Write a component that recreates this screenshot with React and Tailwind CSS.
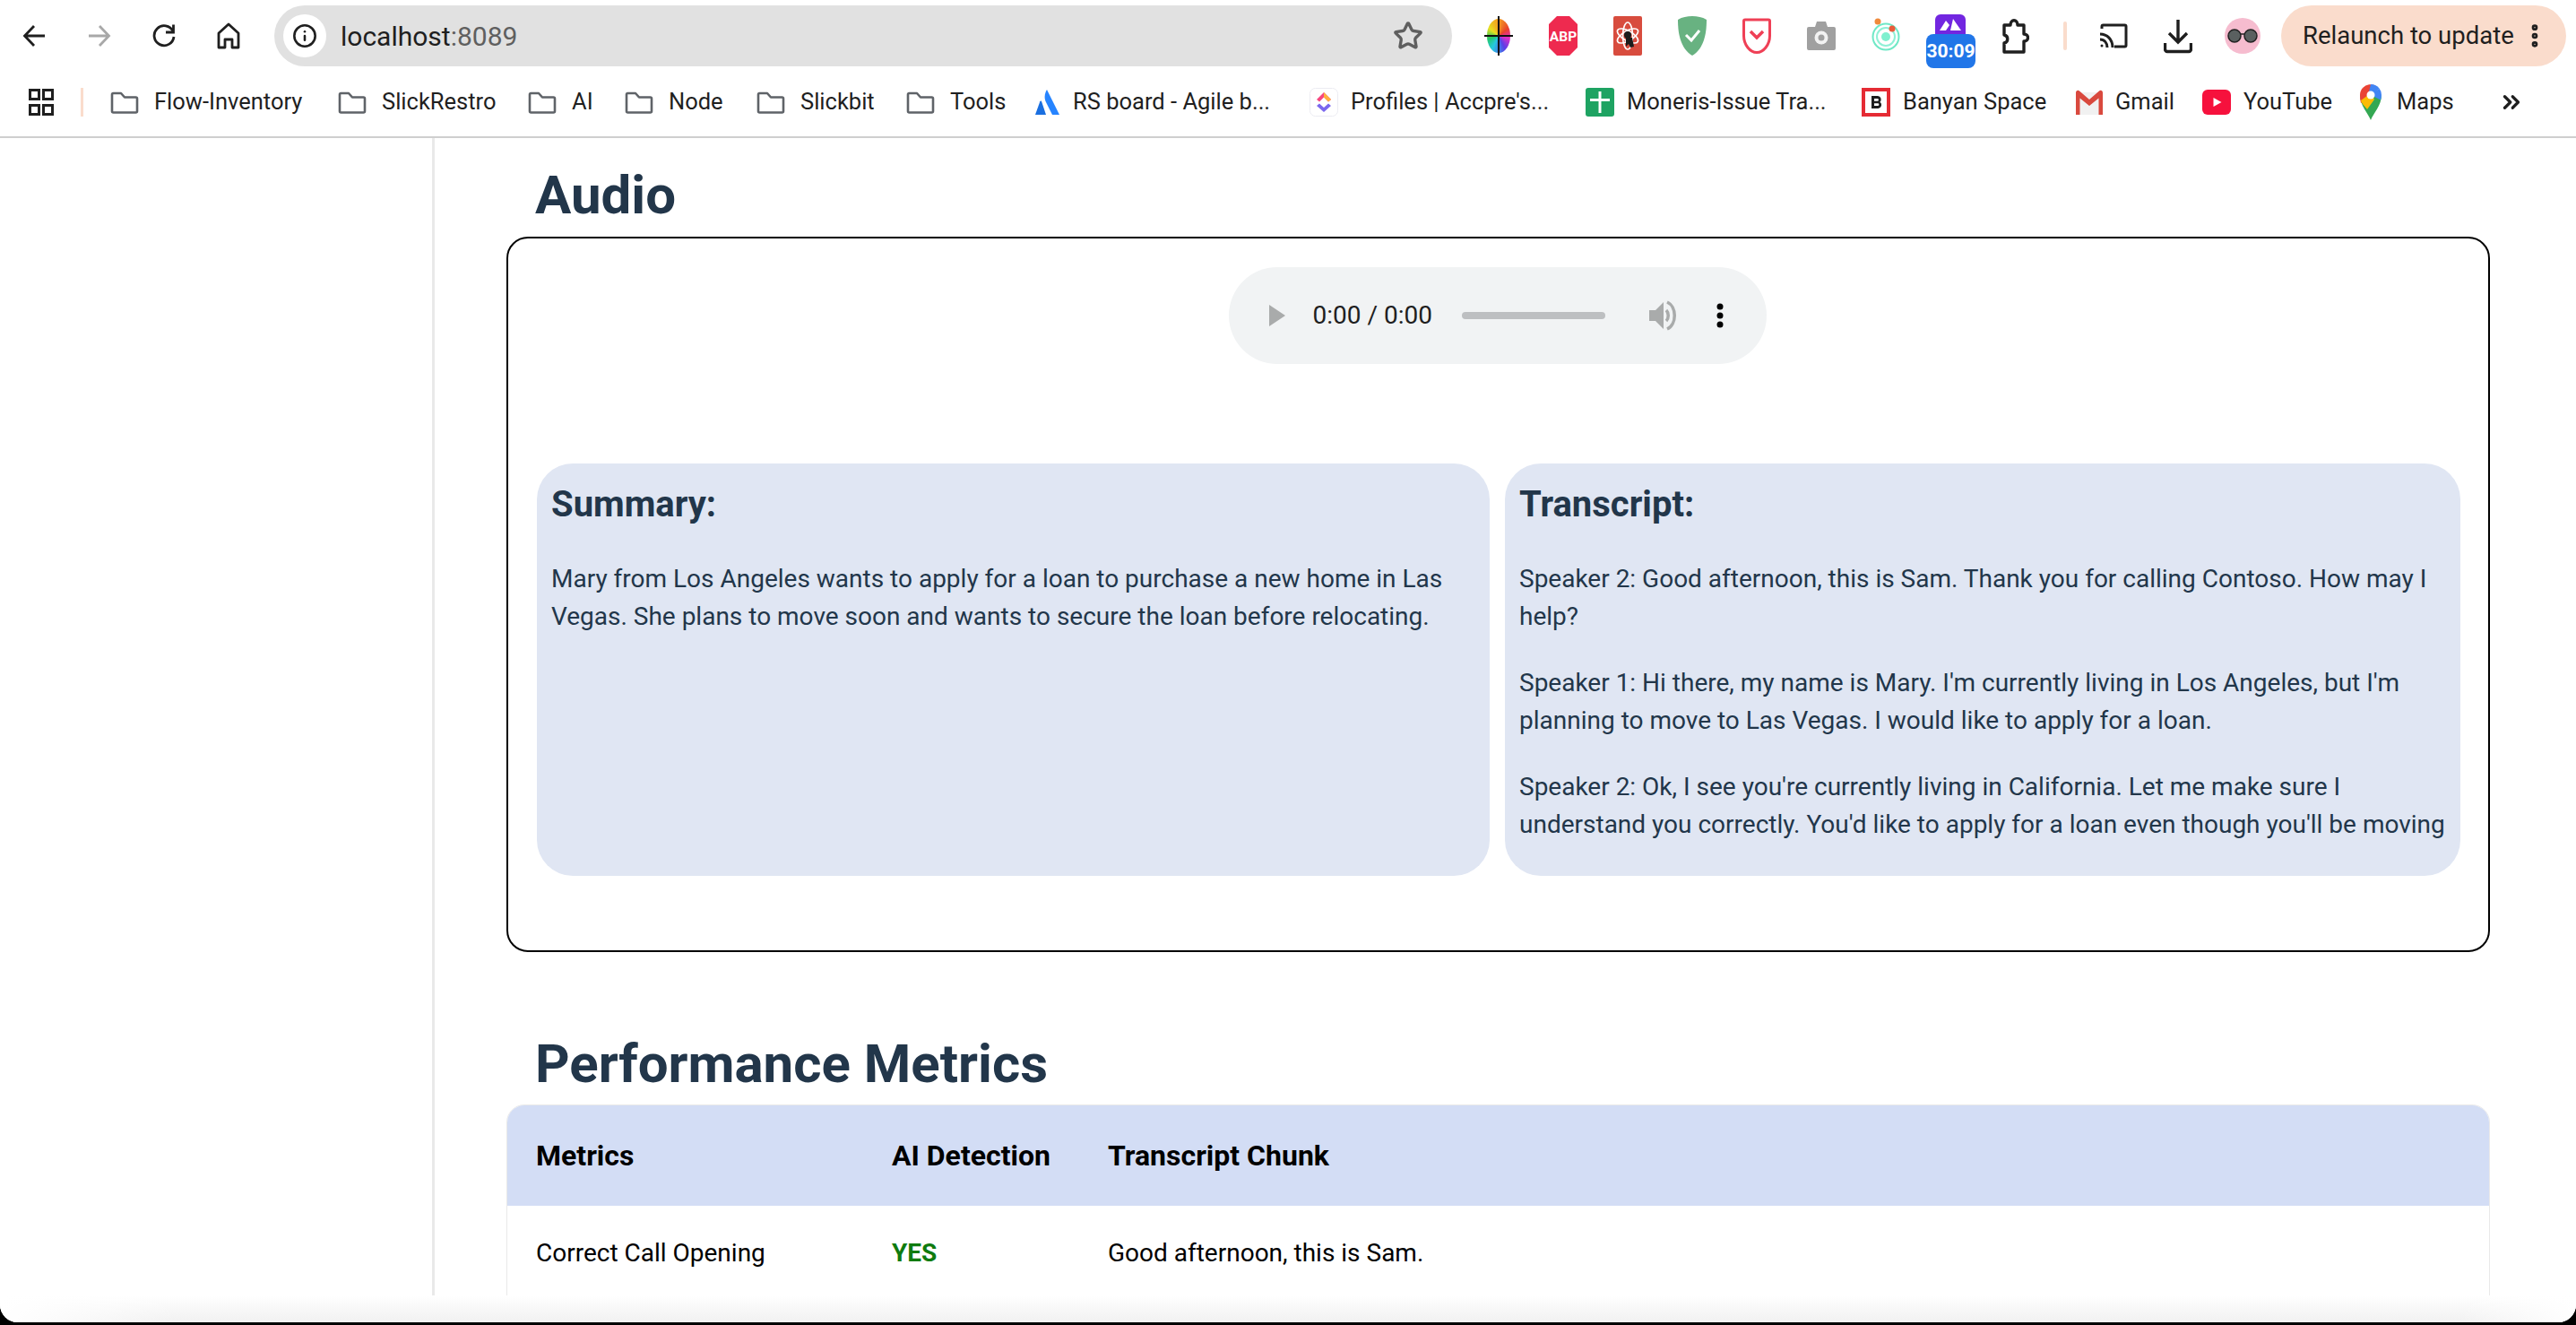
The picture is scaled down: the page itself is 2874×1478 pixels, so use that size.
import React from 'react';
import { Info, Star, MoreVertical, ChevronsRight } from 'lucide-react';

const bookmarks = [
  { label: 'Flow-Inventory', icon: 'folder', width: 'w-[254px]' },
  { label: 'SlickRestro', icon: 'folder', width: 'w-[212px]' },
  { label: 'AI', icon: 'folder', width: 'w-[108px]' },
  { label: 'Node', icon: 'folder', width: 'w-[147px]' },
  { label: 'Slickbit', icon: 'folder', width: 'w-[167px]' },
  { label: 'Tools', icon: 'folder', width: 'w-[144px]' },
  { label: 'RS board - Agile b...', icon: 'atlassian', width: 'w-[306px]' },
  { label: "Profiles | Accpre's...", icon: 'clickup', width: 'w-[308px]' },
  { label: 'Moneris-Issue Tra...', icon: 'sheet', width: 'w-[308px]' },
  { label: 'Banyan Space', icon: 'banyan', width: 'w-[239px]' },
  { label: 'Gmail', icon: 'gmail', width: 'w-[141px]' },
  { label: 'YouTube', icon: 'youtube', width: 'w-[176px]' },
  { label: 'Maps', icon: 'maps', width: 'w-[110px]' },
];

const FavIcon = ({ name }) => {
  if (name === 'folder') {
    return (
      <svg width="32" height="32" viewBox="0 0 32 32" fill="none" stroke="#5f6368" strokeWidth="2.6" className="shrink-0 mr-[3px]">
        <path d="M2 7.5a1.5 1.5 0 0 1 1.5-1.5h8.5l4 4.5h12.5a1.5 1.5 0 0 1 1.5 1.5v14a1.5 1.5 0 0 1-1.5 1.5h-25a1.5 1.5 0 0 1-1.5-1.5z" strokeLinejoin="round" />
      </svg>
    );
  }
  if (name === 'atlassian') {
    return (
      <svg width="28" height="32" viewBox="0 0 28 32" className="shrink-0">
        <path d="M13 2c-3 5-3 10-1 14l7 14h8z" fill="#2684ff" />
        <path d="M7 15c-.6-.8-1.3-.6-1.7.2L0 30h12z" fill="#1a6fe0" />
      </svg>
    );
  }
  if (name === 'clickup') {
    return (
      <svg width="32" height="32" viewBox="0 0 32 32" className="shrink-0">
        <rect x="0.500" y="0.500" width="31" height="31" rx="6" fill="#fff" stroke="#ececf2" />
        <path d="M8 13l8-8 8 8-3 2.600-5-5-5 5z" fill="#f7477f" />
        <path d="M16 5l8 8-3 2.600-5-5z" fill="#ffb13d" />
        <path d="M8 20l3-2.600 5 4.600 5-4.600 3 2.600-8 7z" fill="#7b68ee" />
      </svg>
    );
  }
  if (name === 'sheet') {
    return (
      <svg width="32" height="32" viewBox="0 0 32 32" className="shrink-0">
        <rect width="32" height="32" rx="3" fill="#1ea362" />
        <path d="M14.500 4h3v8H27v3h-9.500v13h-3V15H5v-3h9.500z" fill="#fff" />
      </svg>
    );
  }
  if (name === 'banyan') {
    return (
      <svg width="32" height="32" viewBox="0 0 32 32" className="shrink-0">
        <rect x="2" y="2" width="28" height="28" fill="#fff" stroke="#e52b34" strokeWidth="4" />
        <path d="M11 9h7a4 4 0 0 1 2.500 6.800A4 4 0 0 1 18.500 23H11zm3 3v2.800h3.500a1.400 1.400 0 0 0 0-2.800zm0 5.300V20h4a1.350 1.350 0 0 0 0-2.700z" fill="#1c1c1c" fillRule="evenodd" />
      </svg>
    );
  }
  if (name === 'gmail') {
    return (
      <svg width="30" height="28" viewBox="0 0 30 28" className="shrink-0">
        <path d="M0 3h30v25H0z" fill="#f1f1f1" />
        <path d="M3 4l12 10L27 4v4L15 18 3 8z" fill="#dcdcdc" />
        <path d="M0 3.500C0 1 2.500 0 4 1.500L15 11 26 1.500C27.500 0 30 1 30 3.500V28h-4.500V9.500L15 18 4.500 9.500V28H0z" fill="#d9493e" />
      </svg>
    );
  }
  if (name === 'youtube') {
    return (
      <svg width="32" height="28" viewBox="0 0 32 28" className="shrink-0">
        <rect width="32" height="28" rx="6" fill="#f6113d" />
        <path d="M12.500 9l9 5-9 5z" fill="#fff" />
      </svg>
    );
  }
  return (
    <svg width="24" height="40" viewBox="0 0 24 40" className="shrink-0 mr-[3px]">
      <path d="M12 40C9 32 0 24 0 12h24c0 12-9 20-12 28z" fill="#34a853" />
      <path d="M3 4L12 12 1 21c-.7-3-1-6-1-9 0-3 1-6 3-8z" fill="#ea4335" />
      <path d="M3 4a12 12 0 0 1 15-2L7 16z" fill="#ea4335" />
      <path d="M12 0a12 12 0 0 1 9.500 4.500L8 17z" fill="#4285f4" />
      <path d="M21.500 4.500A12 12 0 0 1 24 12c0 2-.3 3.800-1 5.500L12 12z" fill="#4285f4" />
      <path d="M1 18l11-8 4 7-8 11c-2-3-6-6-7-10z" fill="#fbbc04" />
      <circle cx="12" cy="12" r="4.500" fill="#fff" />
    </svg>
  );
};

const Extensions = () => (
  <div className="flex items-center gap-[40px] ml-[36px]">
    {/* colour wheel */}
    <div className="relative w-[32px] h-[44px] shrink-0">
      <div className="absolute left-[3px] right-[3px] top-[3px] bottom-[3px] rounded-[50%] bg-[conic-gradient(#f39a20,#e8412a,#e22dc8,#5a3fe8,#25c8e0,#25c860,#e8e020,#f39a20)]" />
      <div className="absolute left-[15px] top-0 bottom-0 w-[2px] bg-[#111]" />
      <div className="absolute top-[21px] left-0 right-0 h-[2px] bg-[#111]" />
    </div>
    <svg width="32" height="44" viewBox="0 0 32 44" className="shrink-0">
      <path d="M9 0h14l9 9v26l-9 9H9l-9-9V9z" fill="#ee2a4f" />
      <text x="16" y="28" textAnchor="middle" fill="#fff" fontSize="15.500" fontWeight="700" fontFamily="Roboto, sans-serif">ABP</text>
    </svg>
    <svg width="32" height="44" viewBox="0 0 32 44" className="shrink-0">
      <rect width="32" height="44" rx="2" fill="#d84c3e" />
      <g fill="none" stroke="#fff" strokeWidth="1.600">
        <ellipse cx="16" cy="22" rx="13" ry="5.500" transform="rotate(30 16 22)" />
        <ellipse cx="16" cy="22" rx="13" ry="5.500" transform="rotate(-30 16 22)" />
        <ellipse cx="16" cy="22" rx="5.500" ry="15" />
      </g>
      <circle cx="16" cy="21" r="4" fill="#1c1c1c" />
      <path d="M14 24h7l2 10-4 1-2-4-3 3z" fill="#1c1c1c" />
    </svg>
    <svg width="32" height="44" viewBox="0 0 32 44" className="shrink-0">
      <path d="M16 0c6 0 11 1 16 4 0 16-3 32-16 40C3 36 0 20 0 4c5-3 10-4 16-4z" fill="#68b281" />
      <path d="M9 21l6 6 9-11" fill="none" stroke="#fff" strokeWidth="3" />
    </svg>
    <svg width="32" height="40" viewBox="0 0 32 40" className="shrink-0">
      <path d="M3 2h26a1.500 1.500 0 0 1 1.500 1.500V20c0 10-7 18.500-14.500 18.500S1.500 30 1.500 20V3.500A1.500 1.500 0 0 1 3 2z" fill="#fff" stroke="#ef4056" strokeWidth="3" />
      <path d="M9 15l7 7 7-7" fill="none" stroke="#ef4056" strokeWidth="3.500" />
    </svg>
    <svg width="32" height="36" viewBox="0 0 32 36" className="shrink-0">
      <path d="M2 8h7l2-6h10l2 6h7a2 2 0 0 1 2 2v22a2 2 0 0 1-2 2H2a2 2 0 0 1-2-2V10a2 2 0 0 1 2-2z" fill="#a0a0a0" />
      <circle cx="16" cy="20" r="7.500" fill="#f2f2f2" />
      <circle cx="16" cy="20" r="3.500" fill="#a0a0a0" />
    </svg>
    <svg width="32" height="44" viewBox="0 0 32 44" className="shrink-0">
      <circle cx="16" cy="23" r="14.500" fill="none" stroke="#6fe8c6" strokeWidth="2" />
      <circle cx="16" cy="23" r="10" fill="none" stroke="#8ff0d6" strokeWidth="2" />
      <circle cx="16" cy="23" r="5" fill="#7ff0cf" />
      <circle cx="7" cy="6" r="3.500" fill="#f08a3c" />
      <circle cx="23" cy="14" r="3.500" fill="#ea5b3a" />
    </svg>
    {/* timer badge sits wider than the other icons */}
    <div className="relative w-[32px] h-[44px] shrink-0">
      <div className="absolute left-[-1px] top-[-2px] w-[34px] h-[22px] rounded-t-[6px] bg-[#7226e0]">
        <svg width="34" height="16" viewBox="0 0 34 16" className="mt-[3px]">
          <path d="M5 15l7-11 4 5-4 6zM20 2l9 13h-12z" fill="#fff" />
        </svg>
      </div>
      <div className="absolute left-[-11px] top-[20px] w-[55px] h-[38px] rounded-[8px] bg-[#2176e8] flex items-center justify-center text-white font-bold text-[21px] leading-none whitespace-nowrap">
        30:09
      </div>
    </div>
    <svg width="32" height="44" viewBox="0 0 32 44" fill="none" stroke="#1f1f1f" strokeWidth="3.400" className="shrink-0">
      <path d="M4 10h7c0-7 8-7 8 0h7v10c6 0 6 8 0 8v12H4V30c5-1 5-8 0-9z" strokeLinejoin="round" />
    </svg>
  </div>
);

const Toolbar = () => (
  <div className="flex items-center h-[80px] pl-[25px] pr-[12px]">
    <svg width="26" height="26" viewBox="0 0 26 26" fill="none" stroke="#1f1f1f" strokeWidth="2.800" className="shrink-0">
      <path d="M25 13H3M13 2L2.500 13 13 24" />
    </svg>
    <svg width="26" height="26" viewBox="0 0 26 26" fill="none" stroke="#a8a8a8" strokeWidth="2.800" className="shrink-0 ml-[47px]">
      <path d="M1 13h22M13 2l10.500 11L13 24" />
    </svg>
    <svg width="26" height="28" viewBox="0 0 26 28" fill="none" stroke="#1f1f1f" strokeWidth="2.800" className="shrink-0 ml-[46px]">
      <path d="M23 9a11 11 0 1 0 1 6" />
      <path d="M23.500 1.500V10h-8.500" />
    </svg>
    <svg width="26" height="30" viewBox="0 0 26 30" fill="none" stroke="#1f1f1f" strokeWidth="2.800" className="shrink-0 ml-[46px]">
      <path d="M2 12L13 2l11 10v16h-7v-9H9v9H2z" strokeLinejoin="round" />
    </svg>
    <div className="flex items-center w-[1314px] h-[68px] ml-[38px] rounded-full bg-[#e1e1e1] pl-[10px] pr-[32px] shrink-0">
      <div className="w-[48px] h-[48px] rounded-full bg-white flex items-center justify-center shrink-0">
        <Info size={28} strokeWidth={2.200} color="#1f1f1f" />
      </div>
      <span className="ml-[16px] text-[30px] text-[#1f1f1f]">localhost<span className="text-[#5f5f5f]">:8089</span></span>
      <Star size={34} strokeWidth={2.400} color="#5f5f5f" className="ml-auto" />
    </div>
    <Extensions />
    <div className="w-[4px] h-[32px] rounded-full bg-[#fadccc] ml-[38px] shrink-0" />
    <svg width="32" height="28" viewBox="0 0 32 28" fill="none" stroke="#1f1f1f" strokeWidth="3" className="shrink-0 ml-[36px]">
      <path d="M3 6V3.500A1.500 1.500 0 0 1 4.500 2h24A1.500 1.500 0 0 1 30 3.500v21a1.500 1.500 0 0 1-1.500 1.500H17" />
      <path d="M1 12c8 0 14 6 14 15M1 18c5 0 8 4 8 9" />
      <circle cx="3" cy="25" r="1.500" fill="#1f1f1f" stroke="none" />
    </svg>
    <svg width="32" height="40" viewBox="0 0 32 40" fill="none" stroke="#1f1f1f" strokeWidth="3.400" className="shrink-0 ml-[40px]">
      <path d="M16 2v24M6 17l10 10 10-10M1.500 28v7a2.500 2.500 0 0 0 2.500 2.500h24a2.500 2.500 0 0 0 2.500-2.500v-7" />
    </svg>
    <div className="w-[40px] h-[40px] rounded-full bg-[#f6bccf] flex items-center justify-center ml-[36px] shrink-0">
      <svg width="36" height="16" viewBox="0 0 36 16">
        <circle cx="9" cy="8" r="7" fill="#5a6060" stroke="#222" strokeWidth="1.500" />
        <circle cx="27" cy="8" r="7" fill="#5a6060" stroke="#222" strokeWidth="1.500" />
        <path d="M15 6h6" stroke="#222" strokeWidth="1.500" />
      </svg>
    </div>
    <div className="flex items-center w-[318px] h-[68px] ml-[23px] rounded-full bg-[#fadccc] pl-[24px] shrink-0">
      <span className="text-[27.500px] text-[#1f1f1f] whitespace-nowrap">Relaunch to update</span>
      <MoreVertical size={32} strokeWidth={3} color="#1f1f1f" className="ml-[7px]" />
    </div>
  </div>
);

const BookmarksBar = () => (
  <div className="flex items-center h-[74px] pl-[32px] pr-[57px] pb-[5px] border-b-[2px] border-[#cfcfcf]">
    <svg width="28" height="30" viewBox="0 0 28 30" fill="none" stroke="#1f1f1f" strokeWidth="3" className="shrink-0">
      <rect x="1.500" y="1.500" width="10" height="10" />
      <rect x="16.500" y="1.500" width="10" height="10" />
      <rect x="1.500" y="18.500" width="10" height="10" />
      <rect x="16.500" y="18.500" width="10" height="10" />
    </svg>
    <div className="w-[3px] h-[32px] bg-[#fadccc] ml-[30px] mr-[30px] shrink-0" />
    <div className="flex items-center">
      {bookmarks.map((b) => (
        <div key={b.label} className={`${b.width} flex items-center gap-[14px] whitespace-nowrap text-[25.500px] text-[#1f1f1f]`}>
          <FavIcon name={b.icon} />
          <span>{b.label}</span>
        </div>
      ))}
    </div>
    <ChevronsRight size={30} strokeWidth={2.600} color="#1f1f1f" className="ml-auto" />
  </div>
);

const AudioPlayer = () => (
  <div className="flex items-center w-[600px] h-[108px] rounded-full bg-[#f1f3f4] pl-[45px] text-[28px] text-[#1f1f1f]">
    <svg width="18" height="24" viewBox="0 0 18 24" className="shrink-0">
      <path d="M0 0l18 12L0 24z" fill="#a9abab" />
    </svg>
    <span className="ml-[31px] w-[133px] whitespace-nowrap">0:00 / 0:00</span>
    <div className="ml-[33px] w-[160px] h-[8px] rounded-full bg-[#bdbfc1]" />
    <svg width="32" height="36" viewBox="0 0 32 36" className="ml-[49px] shrink-0">
      <path d="M0 12h7l9-9v30l-9-9H0z" fill="#a9abab" />
      <path d="M19 12c3 3 3 9 0 12M20 3c11 5 11 25 0 30" fill="none" stroke="#a9abab" strokeWidth="3.500" />
    </svg>
    <svg width="8" height="28" viewBox="0 0 8 28" className="ml-[43px] shrink-0">
      <circle cx="4" cy="4" r="3.500" />
      <circle cx="4" cy="14" r="3.500" />
      <circle cx="4" cy="24" r="3.500" />
    </svg>
  </div>
);

const App = () => {
  return (
    <div className="h-[1478px] bg-black font-['Roboto',sans-serif] overflow-hidden">
      <div className="relative h-[1475px] bg-white rounded-b-[20px] overflow-hidden flex flex-col">
        <Toolbar />
        <BookmarksBar />

        <div className="flex flex-1 min-h-0">
          {/* Sidebar */}
          <div className="w-[485px] shrink-0 border-r-[3px] border-[#e9e9e9]" />

          {/* Main content */}
          <div className="flex-1 min-w-0 pl-[80px] pr-[96px] pt-[28px] text-[#22364a]">
            <h2 className="pl-[32px] text-[60px] leading-[72px] font-bold">Audio</h2>
            <div className="mt-[10px] h-[798px] border-[2px] border-black rounded-[24px] pt-[32px]">
              <div className="flex justify-center pr-[2px]">
                <AudioPlayer />
              </div>
              <div className="grid grid-cols-[1063px_1fr] gap-[17px] pl-[32px] pr-[31px] mt-[111px]">
                <div className="h-[460px] rounded-[40px] bg-[#e0e6f3] pl-[16px] pr-[8px] py-[16px] overflow-hidden">
                  <h3 className="text-[40px] leading-[48px] font-bold mt-[6px]">Summary:</h3>
                  <p className="mt-[38px] text-[28px] leading-[42px]">
                    Mary from Los Angeles wants to apply for a loan to purchase a new home in Las Vegas. She plans to move soon and wants to secure the loan before relocating.
                  </p>
                </div>
                <div className="h-[460px] rounded-[40px] bg-[#e0e6f3] pl-[16px] pr-[8px] py-[16px] overflow-hidden">
                  <h3 className="text-[40px] leading-[48px] font-bold mt-[6px]">Transcript:</h3>
                  <p className="mt-[38px] text-[28px] leading-[42px]">
                    Speaker 2: Good afternoon, this is Sam. Thank you for calling Contoso. How may I help?
                  </p>
                  <p className="mt-[32px] text-[28px] leading-[42px]">
                    Speaker 1: Hi there, my name is Mary. I'm currently living in Los Angeles, but I'm planning to move to Las Vegas. I would like to apply for a loan.
                  </p>
                  <p className="mt-[32px] text-[28px] leading-[42px]">
                    Speaker 2: Ok, I see you're currently living in California. Let me make sure I understand you correctly. You'd like to apply for a loan even though you'll be moving
                  </p>
                </div>
              </div>
            </div>

            <h2 className="mt-[89px] pl-[32px] text-[60px] leading-[72px] font-bold">Performance Metrics</h2>
            <div className="mt-[9px] border border-[#e9e9e9] rounded-t-[20px] overflow-hidden">
              <table className="w-full table-fixed border-collapse text-black">
                <thead>
                  <tr className="h-[112px] bg-[#d3ddf5]">
                    <th className="w-[397px] pl-[32px] text-left text-[32px] font-bold">Metrics</th>
                    <th className="w-[241px] pl-[32px] text-left text-[32px] font-bold">AI Detection</th>
                    <th className="pl-[32px] text-left text-[32px] font-bold">Transcript Chunk</th>
                  </tr>
                </thead>
                <tbody>
                  <tr className="h-[106px] text-[28px]">
                    <td className="pl-[32px]">Correct Call Opening</td>
                    <td className="pl-[32px] font-bold text-[#0f7b0f]">YES</td>
                    <td className="pl-[32px]">Good afternoon, this is Sam.</td>
                  </tr>
                </tbody>
              </table>
            </div>
          </div>
        </div>

        {/* window bottom fade */}
        <div className="absolute left-0 right-0 bottom-0 h-[30px] bg-gradient-to-b from-white to-[#f1f1f1]">
          <div className="absolute left-0 top-0 bottom-0 w-[200px] bg-gradient-to-r from-white to-transparent" />
          <div className="absolute right-0 top-0 bottom-0 w-[130px] bg-gradient-to-l from-white to-transparent" />
        </div>
      </div>
    </div>
  );
};

export default App;
